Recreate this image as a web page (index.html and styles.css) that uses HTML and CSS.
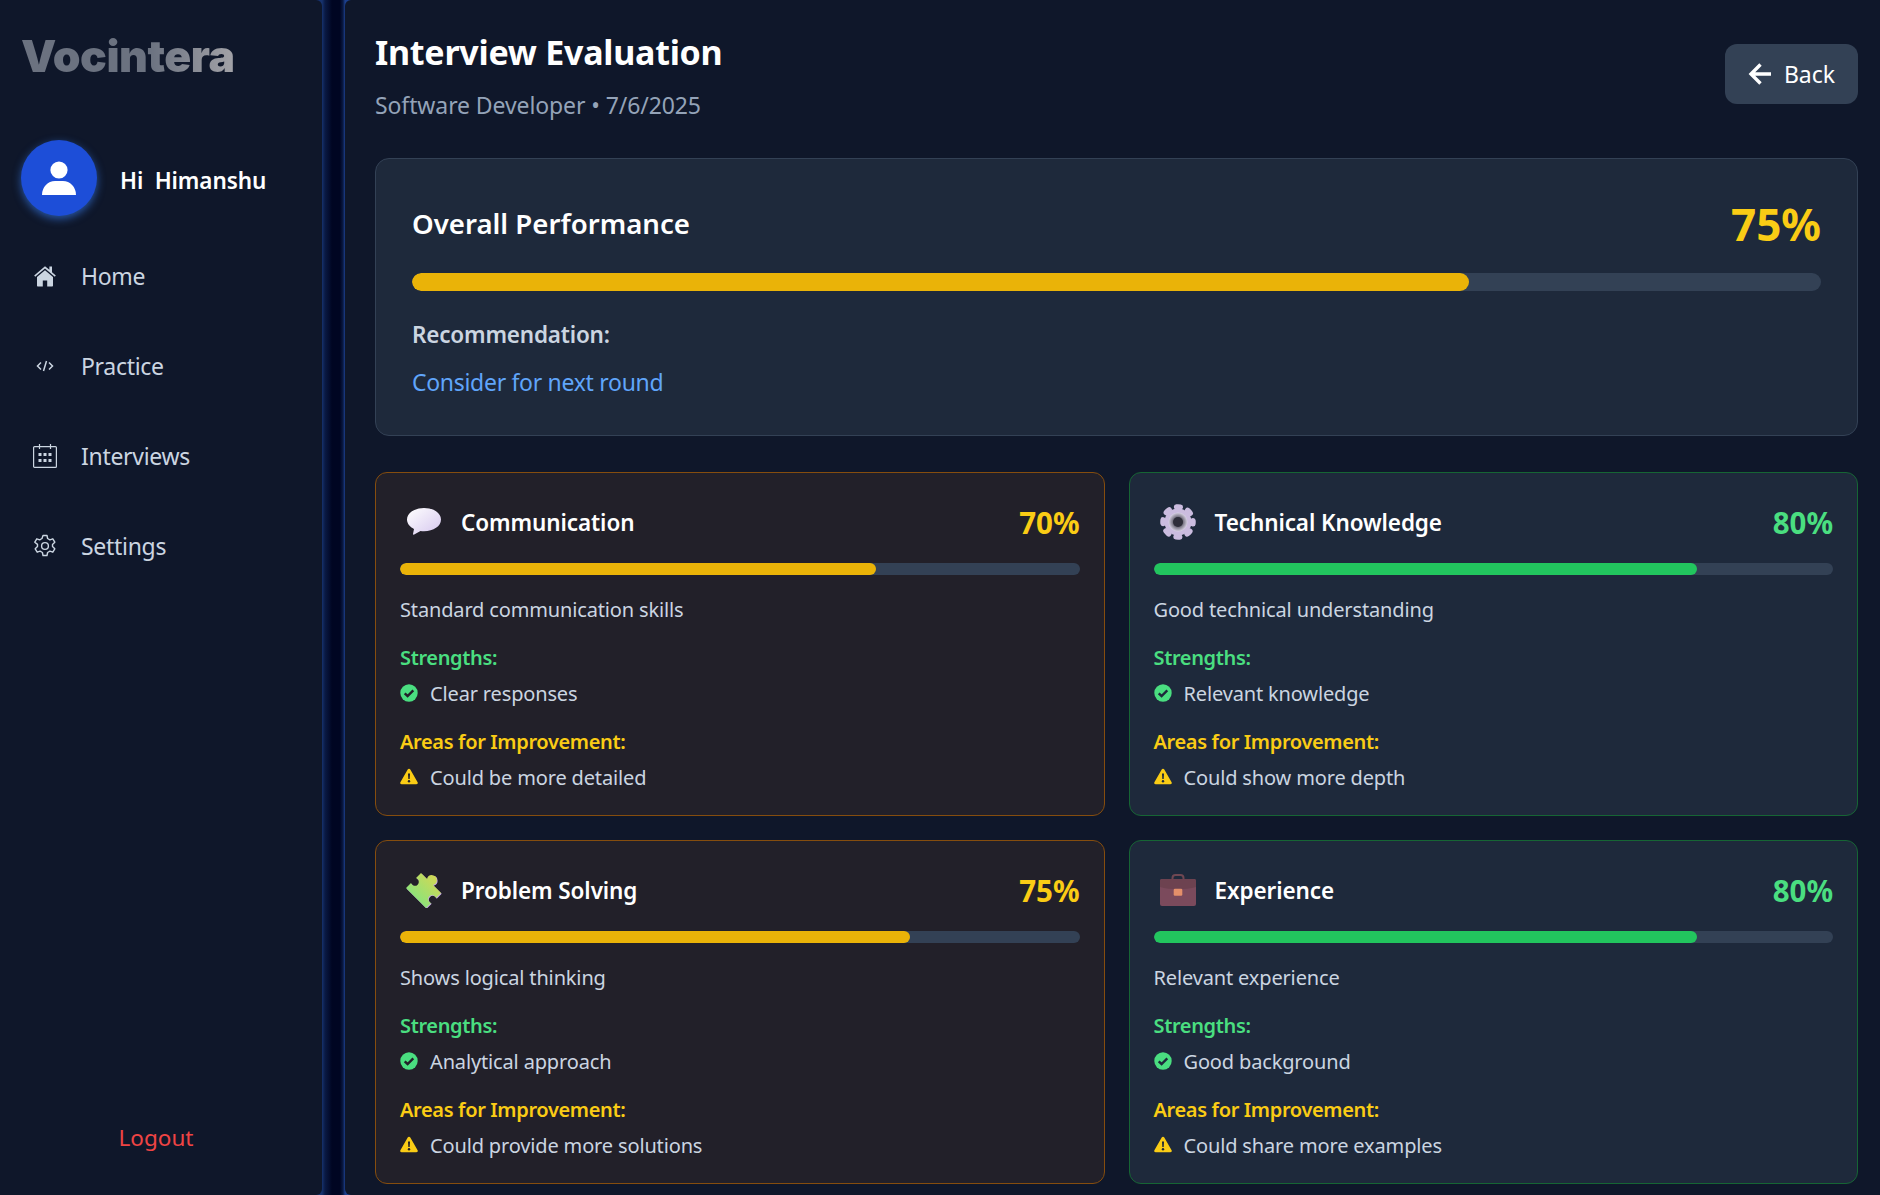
FILE: index.html
```html
<!DOCTYPE html>
<html lang="en">
<head>
    <meta charset="UTF-8">
    <meta name="viewport" content="width=device-width, initial-scale=1.0">
    <title>Interview Evaluation</title>
    <link rel="stylesheet" href="styles.css">
</head>
<body>
    <aside class="sidebar">
        <div class="logo">Vocintera</div>
        <div class="user">
            <div class="avatar">
                <svg viewBox="0 0 36 36" width="36" height="36"><circle cx="18" cy="10" r="8.6" fill="#fff"/><path d="M1 35c0-8 6-14 13-14h8c7 0 13 6 13 14z" fill="#fff"/></svg>
            </div>
            <span class="user-name">Hi&nbsp; Himanshu</span>
        </div>
        <nav class="nav">
            <a class="nav-item">
                <span class="nav-icon"><svg viewBox="0 0 24 24" width="24" height="24"><path d="M12 2.200 1.200 11.600l1 1.200L12 4.400l9.800 8.400 1-1.200-3.800-3.300V2.500h-2.600v3.200z" fill="#cbd5e1"/><path d="M12 6.200 4 13v8.400c0 .6.400 1 1 1h4.800v-6h4.400v6H19c.6 0 1-.4 1-1V13z" fill="#cbd5e1"/></svg></span>
                Home
            </a>
            <a class="nav-item">
                <span class="nav-icon"><svg viewBox="0 0 24 24" width="24" height="24" fill="none" stroke="#cbd5e1" stroke-width="1.500"><path d="M8 8.500 4.500 12 8 15.500M16 8.500l3.500 3.500-3.500 3.500M13.500 7l-3 10"/></svg></span>
                Practice
            </a>
            <a class="nav-item">
                <span class="nav-icon"><svg viewBox="0 0 24 24" width="24" height="24" fill="none" stroke="#cbd5e1" stroke-width="1.200"><rect x=".6" y="2.600" width="22.800" height="20.800" rx="1"/><path d="M6.500 0v5M17.500 0v5"/><path d="M5.500 10.500h3M10.500 10.500h3M15.500 10.500h3M5.500 16.500h3M10.500 16.500h3M15.500 16.500h3" stroke-width="3"/></svg></span>
                Interviews
            </a>
            <a class="nav-item">
                <span class="nav-icon"><svg viewBox="0 0 24 24" width="24" height="24" fill="none" stroke="#cbd5e1" stroke-width="1.400" stroke-linejoin="round"><path d="M10 1.500h4l.6 3 2.300 1.300 2.900-1 2 3.400-2.300 2.200v2.200l2.300 2.200-2 3.400-2.900-1-2.300 1.300-.6 3h-4l-.6-3-2.300-1.300-2.900 1-2-3.400 2.300-2.200v-2.200L1.800 8.200l2-3.400 2.900 1L9 4.500z"/><circle cx="12" cy="12" r="3.400"/></svg></span>
                Settings
            </a>
        </nav>
        <a class="logout">Logout</a>
    </aside>
    <div class="divider"></div>
    <main class="main">
        <header class="page-head">
            <div>
                <h1 class="page-title">Interview Evaluation</h1>
                <p class="page-sub">Software Developer • 7/6/2025</p>
            </div>
            <button class="back-btn">
                <svg viewBox="0 0 24 24" width="24" height="24" fill="none" stroke="#fff" stroke-width="3.400"><path d="M23 12H4M12.500 2.500 3 12l9.500 9.500"/></svg>
                Back
            </button>
        </header>

        <section class="overall">
            <div class="overall-top">
                <h2 class="overall-title">Overall Performance</h2>
                <span class="overall-score">75%</span>
            </div>
            <div class="bar bar-big"><div class="bar-fill yellow" style="width: 75%"></div></div>
            <div class="rec-label">Recommendation:</div>
            <div class="rec-value">Consider for next round</div>
        </section>

        <section class="cards">
            <article class="card card-amber">
                <div class="card-top">
                    <div class="card-name">
                        <svg class="emoji" viewBox="0 0 36 36" width="36" height="36">
                            <defs><linearGradient id="bubble" x1="0" y1="0" x2="1" y2="1"><stop offset="0" stop-color="#fff"/><stop offset="1" stop-color="#d5c6ee"/></linearGradient></defs>
                            <path d="M18 4C8.500 4 1 9 1 15.500c0 4 2.800 7.400 7 9.400L7 30c0 .8.600 1 1.200.6L14.500 27c1.100.1 2.300.2 3.500.2 9.500 0 17-5 17-11.700S27.500 4 18 4z" fill="url(#bubble)"/>
                        </svg>
                        Communication
                    </div>
                    <span class="score yellow-text">70%</span>
                </div>
                <div class="bar"><div class="bar-fill yellow" style="width: 70%"></div></div>
                <p class="card-text">Standard communication skills</p>
                <div class="label green-text">Strengths:</div>
                <div class="point">
                    <svg class="check" viewBox="0 0 18 18" width="18" height="18"><circle cx="9" cy="9" r="8.700" fill="#4ade80"/><path d="M4.700 9.300 7.600 12l5.700-5.600" fill="none" stroke="#222029" stroke-width="2.400"/></svg>
                    Clear responses
                </div>
                <div class="label yellow-text">Areas for Improvement:</div>
                <div class="point">
                    <svg class="warn" viewBox="0 0 18 18" width="18" height="18"><path d="M9 .8c.6 0 1 .3 1.300.8l7.300 12.700c.6 1 0 2-1.200 2H1.600c-1.200 0-1.800-1-1.200-2L7.700 1.600C8 1.100 8.400.8 9 .8z" fill="#facc15"/><path d="M8 5.500h2l-.3 5.500H8.300z" fill="#222029"/><circle cx="9" cy="13.200" r="1.200" fill="#222029"/></svg>
                    Could be more detailed
                </div>
            </article>

            <article class="card card-green">
                <div class="card-top">
                    <div class="card-name">
                        <svg class="emoji" viewBox="0 0 36 36" width="36" height="36">
                            <defs><radialGradient id="hub"><stop offset=".4" stop-color="#55535f"/><stop offset="1" stop-color="#d8d2e4"/></radialGradient></defs>
                            <circle cx="18" cy="18" r="13.500" fill="#cbbcdf"/>
                            <circle cx="18" cy="18" r="15" fill="none" stroke="#cbbcdf" stroke-width="5.500" stroke-linecap="round" stroke-dasharray="3.800 7.981" stroke-dashoffset="1.900"/>
                            <circle cx="18" cy="18" r="9.500" fill="url(#hub)"/><circle cx="18" cy="18" r="5" fill="#2f2e3a"/>
                        </svg>
                        Technical Knowledge
                    </div>
                    <span class="score green-text">80%</span>
                </div>
                <div class="bar"><div class="bar-fill green" style="width: 80%"></div></div>
                <p class="card-text">Good technical understanding</p>
                <div class="label green-text">Strengths:</div>
                <div class="point">
                    <svg class="check" viewBox="0 0 18 18" width="18" height="18"><circle cx="9" cy="9" r="8.700" fill="#4ade80"/><path d="M4.700 9.300 7.600 12l5.700-5.600" fill="none" stroke="#1e293b" stroke-width="2.400"/></svg>
                    Relevant knowledge
                </div>
                <div class="label yellow-text">Areas for Improvement:</div>
                <div class="point">
                    <svg class="warn" viewBox="0 0 18 18" width="18" height="18"><path d="M9 .8c.6 0 1 .3 1.300.8l7.300 12.700c.6 1 0 2-1.200 2H1.600c-1.200 0-1.800-1-1.200-2L7.700 1.600C8 1.100 8.400.8 9 .8z" fill="#facc15"/><path d="M8 5.500h2l-.3 5.500H8.300z" fill="#1e293b"/><circle cx="9" cy="13.200" r="1.200" fill="#1e293b"/></svg>
                    Could show more depth
                </div>
            </article>

            <article class="card card-amber">
                <div class="card-top">
                    <div class="card-name">
                        <svg class="emoji" viewBox="0 0 36 36" width="36" height="36">
                            <defs><linearGradient id="piece" x1="0" y1="1" x2="1" y2="0"><stop offset="0" stop-color="#6fe98a"/><stop offset="1" stop-color="#e0d54d"/></linearGradient></defs>
                            <path d="M15 1 21 7A5 5 0 1 1 27 13L35 21 30 26A4 4 0 1 0 25 31L20 36 0 16 5 11A4 4 0 1 0 10 6z" fill="#c9a9e8" transform="translate(.7 .7)"/>
                            <path d="M15 1 21 7A5 5 0 1 1 27 13L35 21 30 26A4 4 0 1 0 25 31L20 36 0 16 5 11A4 4 0 1 0 10 6z" fill="url(#piece)"/>
                        </svg>
                        Problem Solving
                    </div>
                    <span class="score yellow-text">75%</span>
                </div>
                <div class="bar"><div class="bar-fill yellow" style="width: 75%"></div></div>
                <p class="card-text">Shows logical thinking</p>
                <div class="label green-text">Strengths:</div>
                <div class="point">
                    <svg class="check" viewBox="0 0 18 18" width="18" height="18"><circle cx="9" cy="9" r="8.700" fill="#4ade80"/><path d="M4.700 9.300 7.600 12l5.700-5.600" fill="none" stroke="#222029" stroke-width="2.400"/></svg>
                    Analytical approach
                </div>
                <div class="label yellow-text">Areas for Improvement:</div>
                <div class="point">
                    <svg class="warn" viewBox="0 0 18 18" width="18" height="18"><path d="M9 .8c.6 0 1 .3 1.300.8l7.300 12.700c.6 1 0 2-1.200 2H1.600c-1.200 0-1.800-1-1.200-2L7.700 1.600C8 1.100 8.400.8 9 .8z" fill="#facc15"/><path d="M8 5.500h2l-.3 5.500H8.300z" fill="#222029"/><circle cx="9" cy="13.200" r="1.200" fill="#222029"/></svg>
                    Could provide more solutions
                </div>
            </article>

            <article class="card card-green">
                <div class="card-top">
                    <div class="card-name">
                        <svg class="emoji" viewBox="0 0 36 36" width="36" height="36">
                            <path d="M12.500 8V6c0-2 1.500-3 3-3h5c1.500 0 3 1 3 3v2" fill="none" stroke="#6f4752" stroke-width="2"/>
                            <rect x="0" y="7" width="36" height="27" rx="2" fill="#7b4a5c"/>
                            <path d="M0 9c0-1.200.8-2 2-2h32c1.200 0 2 .8 2 2v6c-10 3-26 3-36 0z" fill="#6d4250"/>
                            <rect x="13.700" y="16.700" width="8.600" height="7" rx="1.200" fill="#e48f6a"/>
                        </svg>
                        Experience
                    </div>
                    <span class="score green-text">80%</span>
                </div>
                <div class="bar"><div class="bar-fill green" style="width: 80%"></div></div>
                <p class="card-text">Relevant experience</p>
                <div class="label green-text">Strengths:</div>
                <div class="point">
                    <svg class="check" viewBox="0 0 18 18" width="18" height="18"><circle cx="9" cy="9" r="8.700" fill="#4ade80"/><path d="M4.700 9.300 7.600 12l5.700-5.600" fill="none" stroke="#1e293b" stroke-width="2.400"/></svg>
                    Good background
                </div>
                <div class="label yellow-text">Areas for Improvement:</div>
                <div class="point">
                    <svg class="warn" viewBox="0 0 18 18" width="18" height="18"><path d="M9 .8c.6 0 1 .3 1.300.8l7.300 12.700c.6 1 0 2-1.200 2H1.600c-1.200 0-1.800-1-1.200-2L7.700 1.600C8 1.100 8.400.8 9 .8z" fill="#facc15"/><path d="M8 5.500h2l-.3 5.500H8.300z" fill="#1e293b"/><circle cx="9" cy="13.200" r="1.200" fill="#1e293b"/></svg>
                    Could share more examples
                </div>
            </article>
        </section>
    </main>
</body>
</html>
```

FILE: styles.css
```css
* {
    box-sizing: border-box;
}

body {
    font-family: "Noto Sans", "Open Sans", sans-serif;
    background-color: #0f172a;
    margin: 0;
    display: flex;
    height: 1195px;
    overflow: hidden;
    color: #fff;
}

/* sidebar */
.sidebar {
    width: 322px;
    flex-shrink: 0;
    padding: 26px 20px 42px 21px;
    display: flex;
    flex-direction: column;
    background-color: #0f172a;
    border-radius: 0 6px 6px 0;
    position: relative;
    z-index: 1;
}

.logo {
    font-family: Inter, "Noto Sans", sans-serif;
    font-size: 44.5px;
    line-height: 60px;
    font-weight: 900;
    letter-spacing: -0.5px;
    background: linear-gradient(90deg, #6b7280 60%, #a3a3a8 100%);
    -webkit-background-clip: text;
    background-clip: text;
    color: transparent;
    width: fit-content;
}

.user {
    display: flex;
    align-items: center;
    gap: 23px;
    margin-top: 54px;
}

.avatar {
    width: 76px;
    height: 76px;
    border-radius: 50%;
    background-color: #1d4ed8;
    box-shadow: 0 3px 8px rgba(59, 130, 246, 0.6);
    display: flex;
    align-items: center;
    justify-content: center;
}

.user-name {
    font-size: 22.5px;
    font-weight: 600;
    letter-spacing: -0.1px;
    padding-top: 4px;
}

.nav {
    display: flex;
    flex-direction: column;
    margin-top: 15px;
}

.nav-item {
    height: 90px;
    display: flex;
    align-items: center;
    gap: 24px;
    padding-left: 12px;
    font-size: 23px;
    letter-spacing: -0.3px;
    color: #cbd5e1;
}

.nav-icon {
    width: 24px;
    height: 24px;
    display: flex;
}

.logout {
    margin-top: auto;
    text-align: center;
    font-size: 22.5px;
    color: #ef4444;
    padding-right: 11px;
}

.divider {
    width: 35px;
    margin: 0 -6px;
    flex-shrink: 0;
    background: linear-gradient(90deg, #16326e 0, #16326e 6px, #0a1a44 9px, #000522 16px, #000522 24px, #0a1a44 27px, #1c3f8c 29px, #1c3f8c 100%);
}

/* main */
.main {
    flex: 1;
    padding: 28px 22px 0 30px;
    min-width: 0;
    background-color: #0f172a;
    border-radius: 6px 0 0 6px;
    position: relative;
    z-index: 1;
}

.page-head {
    display: flex;
    justify-content: space-between;
    align-items: flex-start;
    height: 130px;
}

.page-title {
    margin: 0;
    font-size: 34px;
    line-height: 48px;
    font-weight: 700;
    letter-spacing: -0.25px;
}

.page-sub {
    margin: 13px 0 0;
    font-size: 23px;
    line-height: 32px;
    letter-spacing: -0.1px;
    color: #94a3b8;
}

.back-btn {
    margin-top: 16px;
    width: 133px;
    height: 60px;
    border: none;
    border-radius: 12px;
    background-color: #334155;
    color: #fff;
    font-family: inherit;
    font-size: 23px;
    display: flex;
    align-items: center;
    justify-content: center;
    gap: 12px;
}

.overall {
    height: 278px;
    padding: 35px 36px 0;
    background-color: #1e293b;
    border: 1px solid #334155;
    border-radius: 14px;
}

.overall-top {
    display: flex;
    justify-content: space-between;
    align-items: center;
    height: 60px;
}

.overall-title {
    margin: 0;
    padding-bottom: 2px;
    font-size: 27.6px;
    font-weight: 600;
}

.overall-score {
    font-size: 44px;
    font-weight: 700;
    color: #facc15;
}

.bar {
    height: 12px;
    border-radius: 6px;
    background-color: #334155;
    overflow: hidden;
}

.bar-big {
    height: 18px;
    border-radius: 9px;
    margin-top: 19px;
}

.bar-fill {
    height: 100%;
    border-radius: inherit;
}

.yellow {
    background-color: #eab308;
}

.green {
    background-color: #22c55e;
}

.yellow-text {
    color: #facc15;
}

.green-text {
    color: #4ade80;
}

.rec-label {
    margin-top: 27px;
    font-size: 22.5px;
    line-height: 34px;
    font-weight: 600;
    letter-spacing: -0.2px;
    color: #cbd5e1;
}

.rec-value {
    margin-top: 13px;
    font-size: 23px;
    line-height: 34px;
    letter-spacing: -0.3px;
    color: #60a5fa;
}

.cards {
    display: grid;
    grid-template-columns: 1fr 1fr;
    gap: 24px;
    margin-top: 36px;
}

.card {
    height: 344px;
    padding: 24px;
    border-radius: 12px;
    border: 1px solid;
}

.card-amber {
    background-color: #222029;
    border-color: #854d0e;
}

.card-green {
    background-color: #1e293b;
    border-color: #166534;
}

.card-top {
    display: flex;
    justify-content: space-between;
    align-items: center;
    height: 36px;
    margin-top: 7px;
    margin-bottom: 23px;
}

.card-name {
    display: flex;
    align-items: center;
    gap: 19px;
    font-size: 22.5px;
    font-weight: 600;
    letter-spacing: -0.1px;
    padding-left: 6px;
}

.score {
    font-size: 29.5px;
    font-weight: 700;
}

.card-text {
    margin: 20px 0 0;
    font-size: 20px;
    line-height: 30px;
    letter-spacing: -0.15px;
    color: #cbd5e1;
}

.label {
    margin-top: 18px;
    font-size: 20px;
    line-height: 30px;
    font-weight: 600;
    letter-spacing: -0.35px;
}

.point {
    margin-top: 6px;
    display: flex;
    align-items: center;
    gap: 12px;
    font-size: 20px;
    line-height: 30px;
    letter-spacing: -0.15px;
    color: #cbd5e1;
}

.check,
.warn {
    margin-top: -2px;
}
```
